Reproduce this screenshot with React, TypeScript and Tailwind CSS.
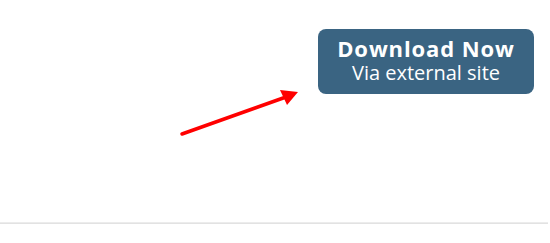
import React from "react";

export default function App() {
  return (
    <div className="relative w-[550px] h-[243px] bg-white overflow-hidden" style={{ fontFamily: '"Open Sans", "Noto Sans", sans-serif' }}>
      <div className="flex justify-end pr-[16px] pt-[29px]">
        <div className="w-[216px] h-[65px] rounded-[8px] bg-[#3a6482] flex flex-col items-center pt-[7px] text-white">
          <div className="text-[22px] font-bold leading-[25px] tracking-[0.9px] whitespace-nowrap">Download Now</div>
          <div className="text-[20px] leading-[24px] whitespace-nowrap">Via external site</div>
        </div>
      </div>
      <svg className="absolute left-0 top-0" width="550" height="243" viewBox="0 0 550 243">
        <line x1="182" y1="134" x2="286" y2="97" stroke="#ff0000" strokeWidth="3.5" strokeLinecap="round" />
        <polygon points="298,92 280,90 287,105" fill="#ff0000" />
      </svg>
      <div className="absolute left-0 top-[222px] w-[548px] h-[2px] bg-[#e2e2e2] border-t border-[#ececec]" />
    </div>
  );
}
